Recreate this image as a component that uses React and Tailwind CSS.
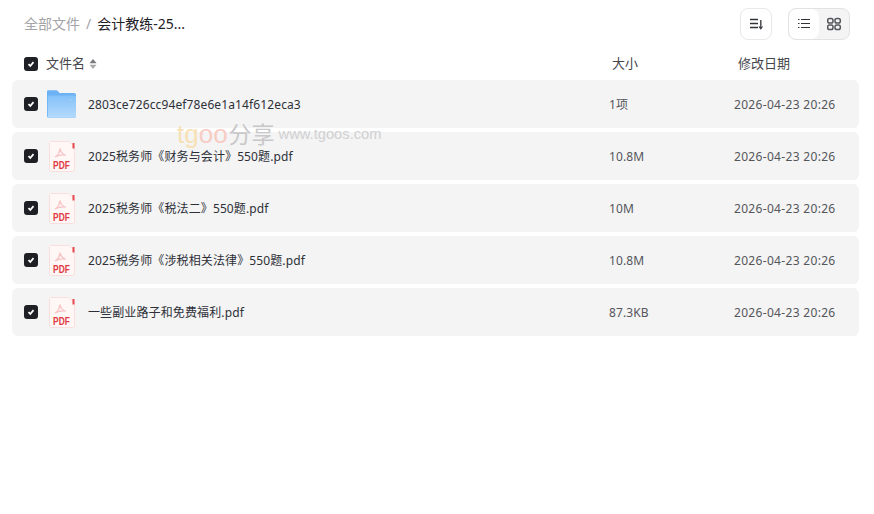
import React from 'react';

// --- Icons ---
const Check = () => (
  <span className="flex h-3.5 w-3.5 items-center justify-center rounded-[3px] bg-[#1f2026]">
    <svg viewBox="0 0 14 14" className="h-3.5 w-3.5" fill="none" stroke="#fff" strokeWidth="1.800">
      <path d="M4.500 7.200 6.300 9 9.500 5.200" />
    </svg>
  </span>
);

const FolderIcon = () => (
  <svg viewBox="0 0 30 28" className="h-7 w-[30px]">
    <defs>
      <linearGradient id="folderFill" x1="0" y1="0" x2="0" y2="1">
        <stop offset="0" stopColor="#84c1f8" />
        <stop offset="1" stopColor="#b4dafc" />
      </linearGradient>
    </defs>
    <path d="M1 1.500C1 .7 1.600.2 2.400.2h7.800c.7 0 1.200.3 1.600.8L13.500 3h14.600c1 0 1.900.8 1.900 1.800V26c0 1-.8 1.800-1.800 1.800H2.800C1.800 27.800 1 27 1 26Z" fill="#6cb2f5" />
    <path d="M1.800 5.600h26.400c1 0 1.800.8 1.800 1.800V26c0 1-.8 1.800-1.800 1.800H1.800Z" fill="url(#folderFill)" />
    <rect x="23" y="9" width="3" height="1.500" fill="#9ccbf6" />
  </svg>
);

const PdfIcon = () => (
  <svg viewBox="0 0 26 31" className="h-[31px] w-[26px]">
    <path d="M1.500 .5H20L25.500 6V29c0 .8-.7 1.500-1.500 1.500H2c-.8 0-1.500-.7-1.500-1.500V1.500Z" fill="#fff6f6" stroke="#fbdede" />
    <rect x="23.500" y="2" width="2" height="5.500" fill="#e8474c" />
    <path d="M6 16c2.500-1.200 4.500-4 5-8.500.6 3.500 2.500 5.600 5.500 6.500-3.800-.3-7.500.2-10.500 2Z" fill="none" stroke="#f8c4c4" strokeWidth="1.300" />
    <text x="4" y="28" fontFamily="'Liberation Sans', sans-serif" fontWeight="700" fontSize="11" fill="#df3a40" textLength="17" lengthAdjust="spacingAndGlyphs">PDF</text>
  </svg>
);

const SortIcon = () => (
  <svg viewBox="0 0 16 16" className="h-4 w-4" fill="none" stroke="#33343a" strokeWidth="1.300">
    <path d="M2 3.500h8M2 7.500h8M2 11.500h8" />
    <path d="M12.800 4v8" />
    <path d="M11 10.500 12.800 12.800 14.500 10.500" strokeWidth="1.200" />
  </svg>
);

const ListIcon = () => (
  <svg viewBox="0 0 16 16" className="h-4 w-4" fill="none" stroke="#33343a" strokeWidth="1.200">
    <path d="M5 3.500h9M5 7.500h9M5 11.500h9M2 3.500h1.500M2 7.500h1.500M2 11.500h1.500" />
  </svg>
);

const GridIcon = () => (
  <svg viewBox="0 0 16 16" className="h-4 w-4" fill="none" stroke="#55565c" strokeWidth="1.500">
    <rect x="1.700" y="2.500" width="5.300" height="4.500" rx="1.800" />
    <rect x="9" y="2.500" width="5.300" height="4.500" rx="1.800" />
    <rect x="1.700" y="9" width="5.300" height="4.500" rx="1.800" />
    <rect x="9" y="9" width="5.300" height="4.500" rx="1.800" />
  </svg>
);

const files = [
  { name: '2803ce726cc94ef78e6e1a14f612eca3', size: '1项', type: 'folder' },
  { name: '2025税务师《财务与会计》550题.pdf', size: '10.8M', type: 'pdf' },
  { name: '2025税务师《税法二》550题.pdf', size: '10M', type: 'pdf' },
  { name: '2025税务师《涉税相关法律》550题.pdf', size: '10.8M', type: 'pdf' },
  { name: '一些副业路子和免费福利.pdf', size: '87.3KB', type: 'pdf' },
];

const App = () => {
  return (
    <div
      className="relative h-[514px] w-[874px] overflow-hidden bg-white text-[13px] text-[#33343a]"
      style={{ fontFamily: '"Noto Sans", "Noto Sans CJK SC", sans-serif' }}
    >
      {/* top bar */}
      <div className="flex h-12 items-center pl-6 pr-6">
        <span className="text-sm text-[#a3a3a8]">全部文件</span>
        <span className="mx-[6px] text-sm text-[#a3a3a8]">/</span>
        <span className="text-sm text-[#1f2026]">会计教练-25...</span>
        <div className="ml-auto flex items-center gap-4">
          <button className="flex h-8 w-8 items-center justify-center rounded-lg border border-[#e8e8ea] bg-white">
            <SortIcon />
          </button>
          <div className="flex h-8 w-[62px] overflow-hidden rounded-lg border border-[#e2e2e4] bg-[#f4f4f5]">
            <span className="flex w-[30px] items-center justify-center rounded-lg bg-white">
              <ListIcon />
            </span>
            <span className="flex flex-1 items-center justify-center">
              <GridIcon />
            </span>
          </div>
        </div>
      </div>

      {/* table head */}
      <div className="flex h-8 items-center pl-6">
        <Check />
        <span className="ml-2 text-[#45464c]">文件名</span>
        <svg viewBox="0 0 8 12" className="ml-[4px] h-3.5 w-2" fill="#77777c">
          <path d="M4 1 7.500 5.300H.5Z" />
          <path d="M4 11 .5 6.700h7Z" fill="#a9a9ad" />
        </svg>
        <span className="ml-[515px] text-[#45464c]">大小</span>
        <span className="ml-[100px] text-[#45464c]">修改日期</span>
      </div>

      {/* rows */}
      <div className="flex w-[859px] flex-col gap-1 pl-3">
        {files.map((f) => (
          <div key={f.name} className="flex h-12 items-center rounded-md bg-[#f4f4f4] pl-3 text-xs tracking-[0.12px]">
            <Check />
            <span className={`flex w-[32px] justify-center ${f.type === 'folder' ? 'ml-[7px]' : 'ml-[8px]'}`}>
              {f.type === 'folder' ? <FolderIcon /> : <PdfIcon />}
            </span>
            <span className={`truncate pt-0.5 text-[#2e3038] ${f.type === 'folder' ? 'ml-[11px] w-[521px]' : 'ml-[10px] w-[521px]'}`}>{f.name}</span>
            <span className="w-[125px] pt-0.5 text-[#55565c]">{f.size}</span>
            <span className="pt-0.5 tracking-[0.32px] text-[#55565c]">2026-04-23 20:26</span>
          </div>
        ))}
      </div>

      {/* watermark */}
      <div className="absolute left-[177px] top-[118px] flex items-center opacity-90">
        <span className="text-[26px] leading-8 text-[#f7dfb0]" style={{ fontFamily: '"Liberation Sans", sans-serif' }}>
          tg<span className="text-[#f8c8c0]">oo</span>
        </span>
        <span className="ml-px text-[23px] leading-8 text-[#c4c4c6]">分享</span>
        <span className="ml-1 text-[14.700px] leading-8 text-[#cdcdcf]" style={{ fontFamily: '"Liberation Sans", sans-serif' }}>www.tgoos.com</span>
      </div>
    </div>
  );
};

export default App;
